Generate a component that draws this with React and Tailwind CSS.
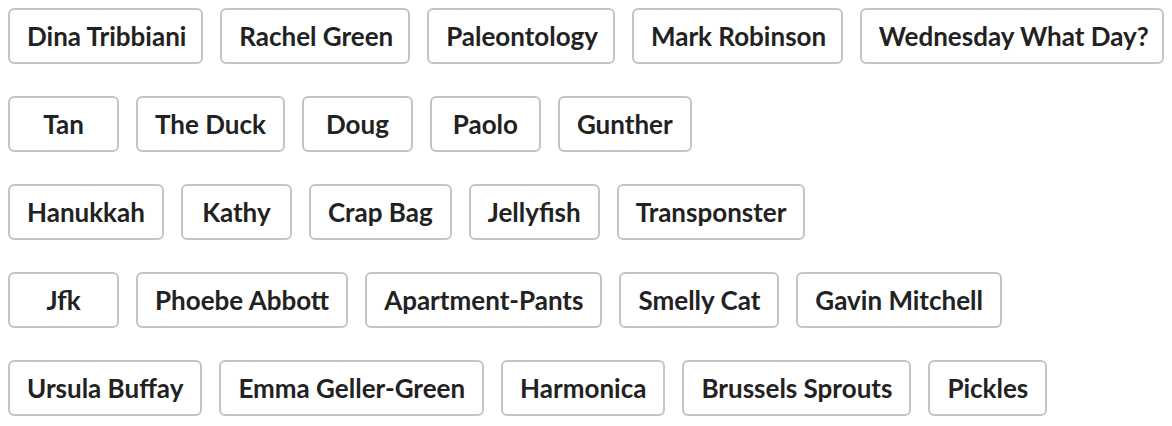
import React from 'react'

const names = [
  'Dina Tribbiani', 'Rachel Green', 'Paleontology', 'Mark Robinson', 'Wednesday What Day?',
  'Tan', 'The Duck', 'Doug', 'Paolo', 'Gunther',
  'Hanukkah', 'Kathy', 'Crap Bag', 'Jellyfish', 'Transponster',
  'Jfk', 'Phoebe Abbott', 'Apartment-Pants', 'Smelly Cat', 'Gavin Mitchell',
  'Ursula Buffay', 'Emma Geller-Green', 'Harmonica', 'Brussels Sprouts', 'Pickles',
]

const rows = [0, 5, 10, 15, 20].map(i => names.slice(i, i + 5))

const App = () => {
  return (
    <div className="bg-white p-2 font-['Lato',sans-serif] flex flex-col gap-[32px]">
      {rows.map((row, r) => (
        <div key={r} className="flex gap-[17px]">
          {row.map(name => (
            <button
              key={name}
              className="h-[56px] min-w-[111px] px-[17px] border-2 border-[#c4c4c4] rounded-md bg-white text-[26px] font-bold text-[#222] whitespace-nowrap"
            >
              {name}
            </button>
          ))}
        </div>
      ))}
    </div>
  )
}

export default App
